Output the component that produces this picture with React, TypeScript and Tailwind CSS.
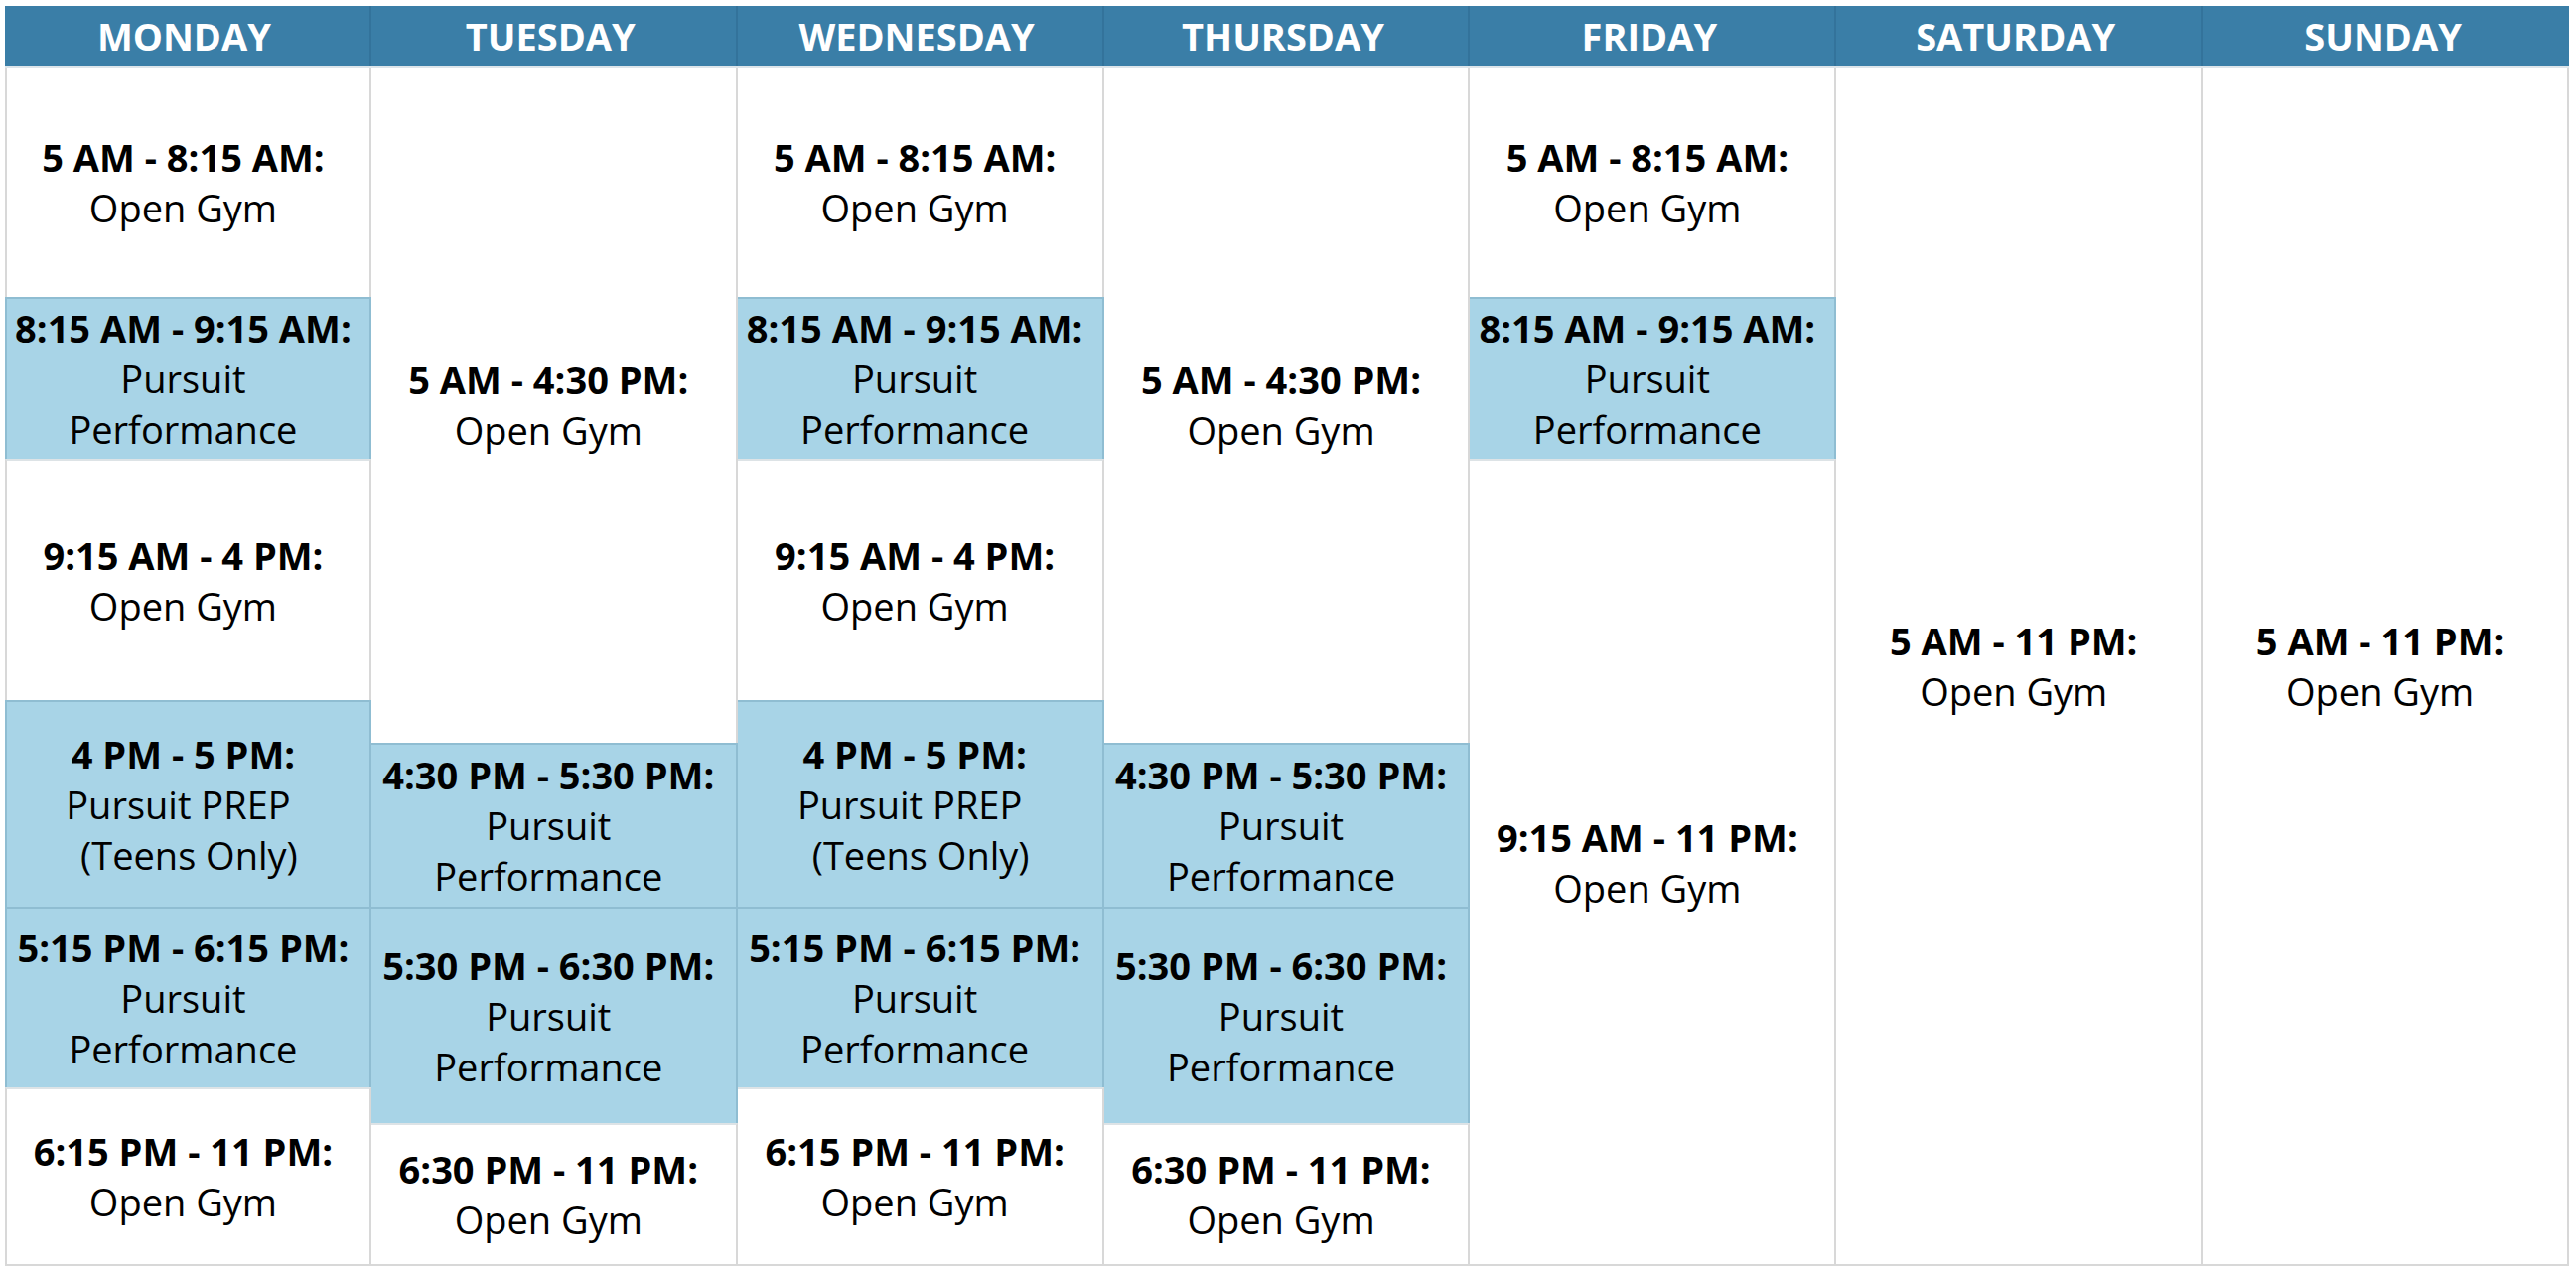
import React from "react";

type Slot = { time: string; lines: string[]; h: number; blue?: boolean; prep?: boolean };

const DAYS = ["MONDAY", "TUESDAY", "WEDNESDAY", "THURSDAY", "FRIDAY", "SATURDAY", "SUNDAY"];

const MON_WED: Slot[] = [
  { time: "5 AM - 8:15 AM:", lines: ["Open Gym"], h: 231 },
  { time: "8:15 AM - 9:15 AM:", lines: ["Pursuit", "Performance"], h: 163, blue: true },
  { time: "9:15 AM - 4 PM:", lines: ["Open Gym"], h: 243 },
  { time: "4 PM - 5 PM:", lines: ["Pursuit PREP", "(Teens Only)"], h: 208, blue: true, prep: true },
  { time: "5:15 PM - 6:15 PM:", lines: ["Pursuit", "Performance"], h: 182, blue: true },
  { time: "6:15 PM - 11 PM:", lines: ["Open Gym"], h: 180 },
];

const TUE_THU: Slot[] = [
  { time: "5 AM - 4:30 PM:", lines: ["Open Gym"], h: 680 },
  { time: "4:30 PM - 5:30 PM:", lines: ["Pursuit", "Performance"], h: 165, blue: true },
  { time: "5:30 PM - 6:30 PM:", lines: ["Pursuit", "Performance"], h: 218, blue: true },
  { time: "6:30 PM - 11 PM:", lines: ["Open Gym"], h: 144 },
];

const FRI: Slot[] = [
  { time: "5 AM - 8:15 AM:", lines: ["Open Gym"], h: 231 },
  { time: "8:15 AM - 9:15 AM:", lines: ["Pursuit", "Performance"], h: 163, blue: true },
  { time: "9:15 AM - 11 PM:", lines: ["Open Gym"], h: 813 },
];

const WEEKEND: Slot[] = [{ time: "5 AM - 11 PM:", lines: ["Open Gym"], h: 1207 }];

const COLUMNS = [MON_WED, TUE_THU, MON_WED, TUE_THU, FRI, WEEKEND, WEEKEND];

function Cell({ slot, first, last, leftEdge }: { slot: Slot; first: boolean; last: boolean; leftEdge: boolean }) {
  return (
    <div
      style={{ height: slot.h }}
      className={`flex flex-col items-center justify-center text-center pr-[10px] border-r-2 ${
        leftEdge ? "border-l-2" : ""
      } ${last ? "border-b-2 border-b-[#d8d8d8]" : ""} ${
        slot.blue
          ? "bg-[#a8d4e7] border-r-[#8fbdd2] border-l-[#8fbdd2] border-t-2 border-t-[#8fbdd2]"
          : `bg-white border-r-[#d8d8d8] border-l-[#d8d8d8] ${first ? "" : "border-t-2 border-t-[#dde3e6]"}`
      }`}
    >
      <div className="font-bold leading-[51px]">{slot.time}</div>
      {slot.lines.map((line, i) => (
        <div
          key={line}
          className={`leading-[51px] ${slot.prep && i === 0 ? "pr-[10px]" : ""} ${slot.prep && i === 1 ? "pl-[12px]" : ""}`}
        >
          {line}
        </div>
      ))}
    </div>
  );
}

export default function App() {
  return (
    <div className="min-h-screen bg-white pt-[6px] pl-[5px] font-['Open_Sans',sans-serif] text-[38px] text-black">
      <div className="w-[2582px]">
        {/* Day headers */}
        <div className="grid grid-cols-7 h-[62px] bg-[#3a7ea7] border-b-2 border-[#dde5ea]">
          {DAYS.map((day, i) => (
            <div
              key={day}
              className={`flex items-center justify-center pr-[6px] text-white font-bold text-[38px] ${
                i < 6 ? "border-r-2 border-[#33739b]" : ""
              }`}
            >
              {day}
            </div>
          ))}
        </div>

        {/* Schedule columns */}
        <div className="grid grid-cols-7">
          {COLUMNS.map((slots, ci) => (
            <div key={ci} className="flex flex-col">
              {slots.map((slot, si) => (
                <Cell
                  key={si}
                  slot={slot}
                  first={si === 0}
                  last={si === slots.length - 1}
                  leftEdge={ci === 0}
                />
              ))}
            </div>
          ))}
        </div>
      </div>
    </div>
  );
}
